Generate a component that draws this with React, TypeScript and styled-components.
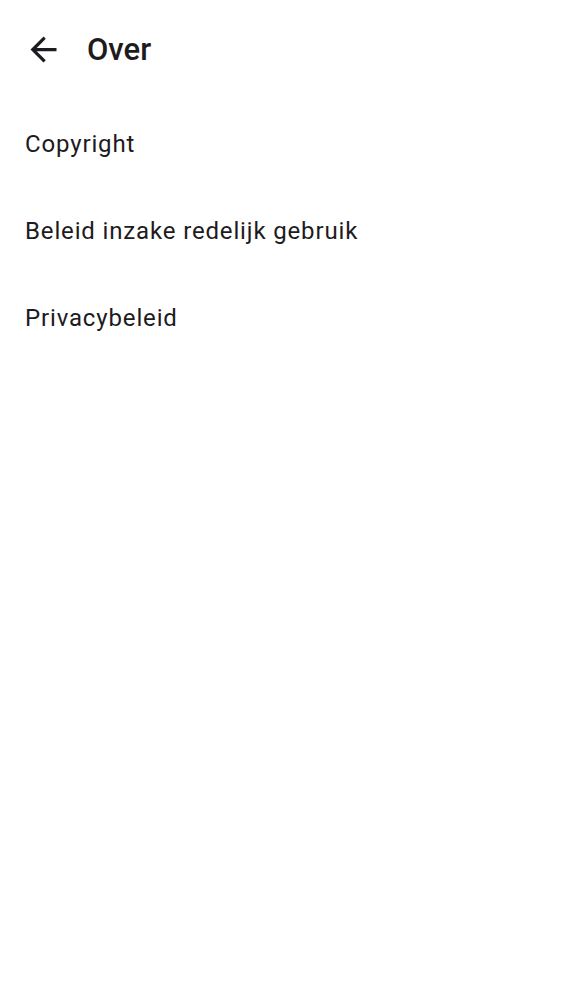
import styled, { createGlobalStyle } from "styled-components";

const GlobalStyle = createGlobalStyle`
  html, body {
    margin: 0;
    padding: 0;
    background: #ffffff;
  }
  body {
    font-family: Roboto, "Noto Sans", sans-serif;
    color: #1d1b20;
  }
`;

const Page = styled.div`
  width: 562px;
  min-height: 1000px;
  background: #ffffff;
`;

const Toolbar = styled.header`
  display: flex;
  align-items: center;
  height: 99px;
  padding-left: 23px;
  box-sizing: border-box;
`;

const BackButton = styled.button`
  display: flex;
  align-items: center;
  justify-content: center;
  width: 40px;
  height: 40px;
  padding: 0;
  border: none;
  background: none;
  color: #1d1b20;
  cursor: pointer;
`;

const Title = styled.h1`
  margin: 0 0 0 24px;
  font-size: 31px;
  font-weight: 500;
  letter-spacing: 0;
  color: #1d1b20;
`;

const List = styled.ul`
  list-style: none;
  margin: 0;
  padding: 1px 0 0;
`;

const Item = styled.li`
  display: flex;
  align-items: center;
  height: 87px;
  padding-left: 25px;
  font-size: 24px;
  letter-spacing: 0.85px;
  color: #1d1b20;
`;

const items = ["Copyright", "Beleid inzake redelijk gebruik", "Privacybeleid"];

export default function App() {
  return (
    <Page>
      <GlobalStyle />
      <Toolbar>
        <BackButton aria-label="Terug">
          <svg width="39" height="39" viewBox="0 0 24 24" fill="currentColor">
            <path d="M20 11H7.83l5.59-5.59L12 4l-8 8 8 8 1.41-1.41L7.83 13H20v-2z" />
          </svg>
        </BackButton>
        <Title>Over</Title>
      </Toolbar>
      <List>
        {items.map((label) => (
          <Item key={label}>{label}</Item>
        ))}
      </List>
    </Page>
  );
}
